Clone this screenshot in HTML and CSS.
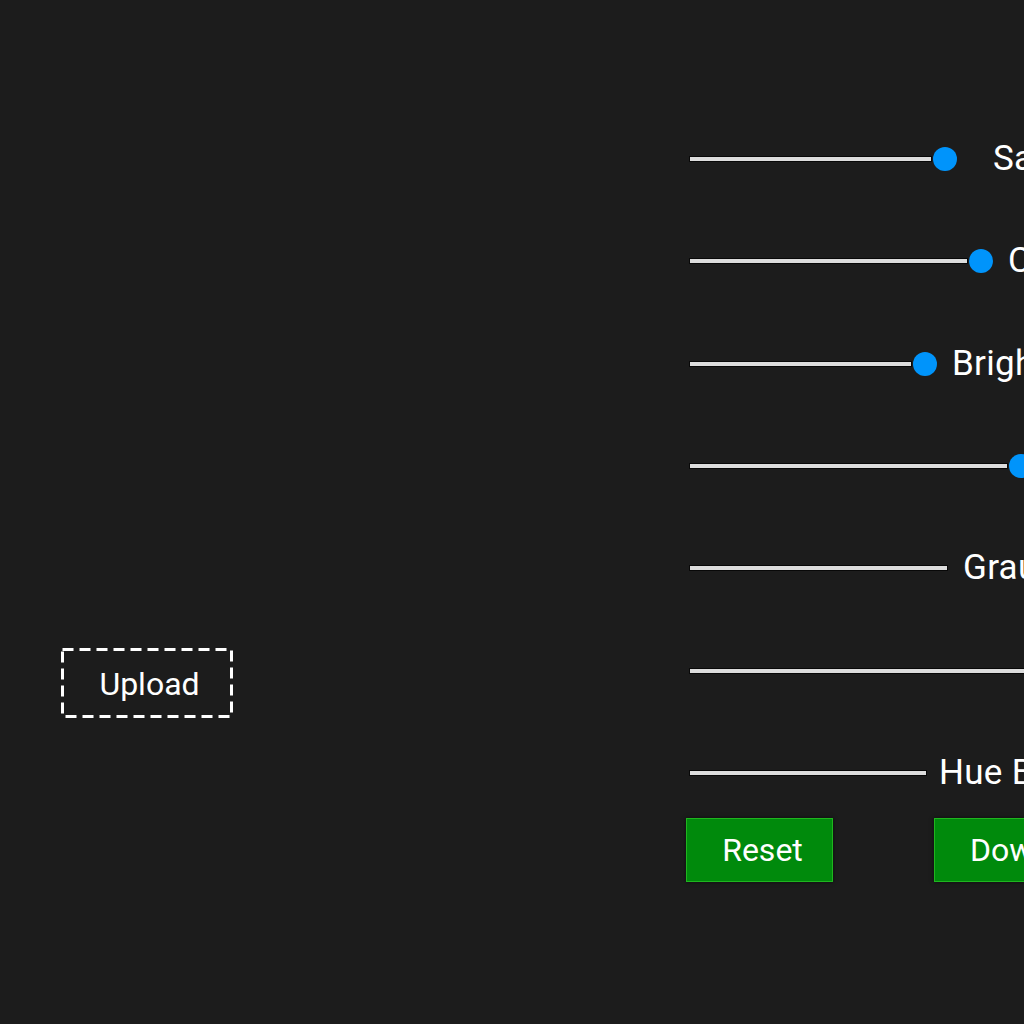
FILE: index.html
```html
<!DOCTYPE html>
<html lang="en">
<head>
<meta charset="utf-8">
<title>Image Filters</title>
<link rel="stylesheet" href="styles.css">
</head>
<body>
<main class="app">
  <section class="left">
    <div class="upload">
      <svg class="upload-border" width="172" height="70" viewBox="0 0 172 70" aria-hidden="true">
        <rect x="1.5" y="1.5" width="169" height="67" fill="none" stroke="#ffffff" stroke-width="3" stroke-dasharray="11 6"/>
      </svg>
      <span>Upload</span>
    </div>
  </section>
  <section class="controls">
    <div class="row">
      <div class="track" style="width:241px"></div>
      <div class="thumb"></div>
      <span class="label label-wide">Saturation</span>
    </div>
    <div class="row">
      <div class="track" style="width:277px"></div>
      <div class="thumb"></div>
      <span class="label">Contrast</span>
    </div>
    <div class="row">
      <div class="track" style="width:221px"></div>
      <div class="thumb"></div>
      <span class="label">Brightness</span>
    </div>
    <div class="row">
      <div class="track" style="width:317px"></div>
      <div class="thumb"></div>
      <span class="label">Sepia</span>
    </div>
    <div class="row">
      <div class="track" style="width:257px"></div>
      <span class="label">Graustufen</span>
    </div>
    <div class="row">
      <div class="track" style="width:360px"></div>
      <span class="label">Invert</span>
    </div>
    <div class="row">
      <div class="track" style="width:236px"></div>
      <span class="label label-tight">Hue Blur</span>
    </div>
    <div class="buttons">
      <button class="btn btn-reset">Reset</button>
      <button class="btn btn-download">Download</button>
    </div>
  </section>
</main>
</body>
</html>
```
FILE: styles.css
```css
html, body {
  margin: 0;
  padding: 0;
  background: #1c1c1c;
  overflow: hidden;
}
body {
  width: 1024px;
  height: 1024px;
  font-family: Roboto, "Liberation Sans", sans-serif;
  color: #ffffff;
}
.app {
  display: flex;
  height: 100%;
}
.left {
  width: 689px;
  flex: none;
  padding: 648px 0 0 61px;
  box-sizing: border-box;
}
.upload {
  position: relative;
  width: 172px;
  height: 70px;
  display: flex;
  align-items: center;
  justify-content: center;
  font-size: 32px;
  padding: 2px 0 0 5px;
  box-sizing: border-box;
}
.upload-border {
  position: absolute;
  left: 0;
  top: 0;
}
.controls {
  flex: none;
  width: 600px;
  padding-top: 139px;
  display: flex;
  flex-direction: column;
  gap: 62.33px;
}
.row {
  height: 40px;
  display: flex;
  align-items: center;
  white-space: nowrap;
}
.track {
  flex: none;
  height: 4px;
  background: #dcdcdc;
  border: 1px solid #080808;
  box-sizing: content-box;
}
.thumb {
  flex: none;
  width: 24px;
  height: 24px;
  border-radius: 50%;
  background: #0094fb;
  margin-left: 1px;
}
.label {
  font-size: 35px;
  margin-left: 15px;
  line-height: 40px;
  letter-spacing: 0.3px;
}
.label-wide {
  margin-left: 36px;
}
.label-tight {
  margin-left: 12px;
}
.buttons {
  display: flex;
  gap: 101px;
  margin-top: -37px;
  margin-left: -3px;
}
.btn {
  flex: none;
  width: 147px;
  height: 64px;
  background: #008a0c;
  border: 1px solid #1fb51f;
  color: #ffffff;
  font-family: Roboto, "Liberation Sans", sans-serif;
  font-size: 32px;
  padding: 0;
  box-shadow: 0 0 4px rgba(0,0,0,0.6);
}
.btn-reset {
  padding-left: 6px;
}
.btn-download {
  width: 220px;
  text-align: left;
  padding-left: 35px;
}
```
